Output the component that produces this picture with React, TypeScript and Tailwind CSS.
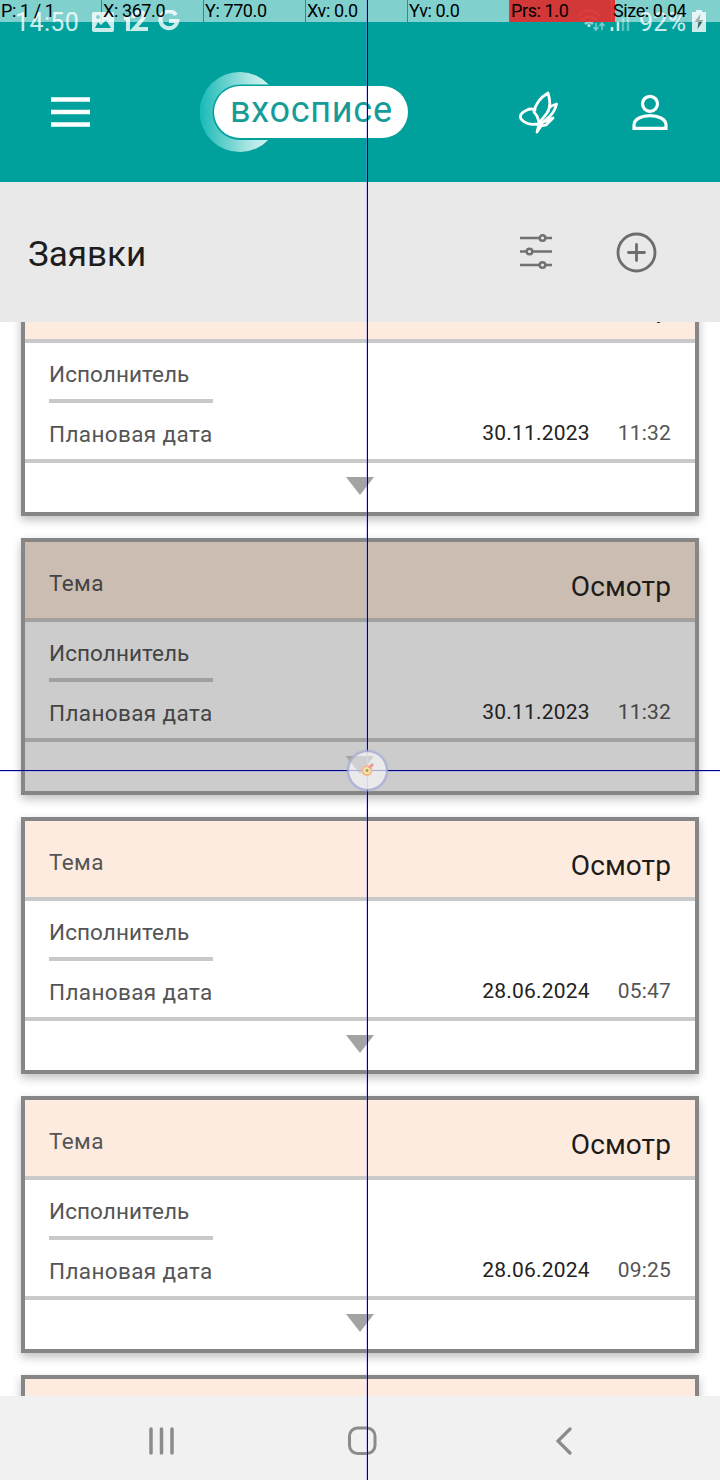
import React from 'react';

type Request = { date: string; time: string; pressed?: boolean };

const requests: Request[] = [
  { date: '30.11.2023', time: '11:32' },
  { date: '30.11.2023', time: '11:32', pressed: true },
  { date: '28.06.2024', time: '05:47' },
  { date: '28.06.2024', time: '09:25' },
  { date: '28.06.2024', time: '09:25' },
];

function Card({ date, time, pressed }: Request) {
  const line = pressed ? 'border-[#a3a1a0]' : 'border-[#c9c9c9]';
  const label = pressed ? 'text-[#444444]' : 'text-[#555555]';
  return (
    <article
      className={`flex h-[257px] shrink-0 flex-col border-4 border-[#868686] shadow-[0_4px_9px_rgba(0,0,0,0.25)] ${pressed ? 'bg-[#cccccc]' : 'bg-white'}`}
    >
      <div className={`flex h-20 shrink-0 justify-between border-b-4 px-6 ${line} ${pressed ? 'bg-[#cbbdb2]' : 'bg-[#feebe0]'}`}>
        <span className={`pt-[27px] text-[22.5px] leading-7 tracking-[0.4px] ${label}`}>Тема</span>
        <span className="pt-[29px] text-[28px] leading-8 tracking-[0.1px] text-[#1c1b1a]">Осмотр</span>
      </div>
      <div className={`flex h-[120px] shrink-0 justify-between border-b-4 px-6 ${line}`}>
        <div className={`w-[164px] whitespace-nowrap text-[22.5px] leading-7 ${label}`}>
          <div className={`h-[60px] border-b-4 pt-[17px] tracking-[0.08px] ${line}`}>Исполнитель</div>
          <div className="pt-[17px] tracking-[0.38px]">Плановая дата</div>
        </div>
        <div className="flex items-start gap-7 pt-[76px] text-[21px] leading-7 tracking-[0.2px]">
          <span className="text-[#222222]">{date}</span>
          <span className={pressed ? 'text-[#444444]' : 'text-[#555555]'}>{time}</span>
        </div>
      </div>
      <div className="flex justify-center pt-[14px]">
        <svg width="28" height="19" viewBox="0 0 28 19" className={pressed ? 'text-[#828282]' : 'text-[#a3a3a3]'}>
          <path d="M0 0H28L14 18Z" fill="currentColor" />
        </svg>
      </div>
    </article>
  );
}

function StatusBar() {
  return (
    <div className="flex h-11 items-start justify-between pl-[15px] pr-[14px] text-white/80">
      <div className="flex items-start">
        <span className="w-[77px] pt-[8px] text-[25px] leading-[30px] tracking-[0.4px]">14:50</span>
        <svg width="22" height="20" viewBox="0 0 22 20" className="mt-3">
          <path fill="currentColor" fillRule="evenodd" d="M2 0H20Q22 0 22 2V18Q22 20 20 20H2Q0 20 0 18V2Q0 0 2 0ZM3 16H19L14 8L9 13L6 10ZM6 3A2 2 0 1 0 6 7A2 2 0 0 0 6 3Z" />
        </svg>
        <svg width="28" height="24" viewBox="0 0 28 24" className="ml-2 mt-2">
          <path d="M2 10H6V23M11 10Q12 3 18 4Q25 5 20 12L12 21H26" fill="none" stroke="currentColor" strokeWidth="4" />
        </svg>
        <svg width="22" height="22" viewBox="0 0 22 22" className="ml-2 mt-[10px]">
          <path d="M18 5A8.5 8.5 0 1 0 19.3 11H11" fill="none" stroke="currentColor" strokeWidth="4" />
        </svg>
      </div>
      <div className="flex items-start">
        <svg width="58" height="24" viewBox="0 0 58 24" className="mt-2" fill="none" stroke="currentColor">
          <g strokeWidth="2.5" opacity=".7">
            <path d="M1 8Q12-3 23 8M4 12.500Q12 5 20 12.500M8 16Q12 12.500 16 16" />
          </g>
          <circle cx="12" cy="17.500" r="1.600" fill="currentColor" stroke="none" />
          <path d="M19 15V22M16.500 19L19 22L21.500 19M25 22V15M22.500 18L25 15L27.500 18" strokeWidth="1.500" opacity=".6" />
          <path d="M35 19V23M41 14V23" strokeWidth="2.500" />
          <path d="M46 10V23M51 5V23" strokeWidth="2.500" opacity=".45" />
        </svg>
        <span className="ml-[4px] w-[53px] pt-[8px] text-[25px] leading-[30px] tracking-[0.3px]">92%</span>
        <svg width="14" height="22" viewBox="0 0 14 22" className="mt-[10px]">
          <path d="M4 0H10V2H14V22H0V2H4Z" fill="currentColor" />
          <path d="M8.500 4L2.500 12H6.500L5.500 19L11.500 10H7.500Z" fill="#37625f" />
        </svg>
      </div>
    </div>
  );
}

function Logo() {
  return (
    <svg width="210" height="84" viewBox="0 -2 210 84" className="shrink-0">
      <defs>
        <linearGradient id="moon" x1="0" x2="1">
          <stop offset="0" stopColor="#17b9b5" />
          <stop offset=".7" stopColor="#a9e5e2" />
          <stop offset="1" stopColor="#d8f5f3" />
        </linearGradient>
      </defs>
      <path d="M69 12.800A40 40 0 1 0 69 67.200Z" fill="url(#moon)" />
      <rect x="12.500" y="12.500" width="196" height="55.500" rx="27.700" fill="#00a19d" />
      <rect x="14" y="14" width="194" height="52" rx="26" fill="#ffffff" />
      <text x="30" y="50" textLength="162" fontFamily="Roboto, sans-serif" fontSize="36" fill="#159c98">вхосписе</text>
    </svg>
  );
}

const cells = ['P: 1 / 1', 'X: 367.0', 'Y: 770.0', 'Xv: 0.0', 'Yv: 0.0', 'Prs: 1.0', 'Size: 0.04'];

function PointerOverlay() {
  return (
    <div className="pointer-events-none absolute inset-0">
      <div className="grid h-[22px] grid-cols-[101px_101px_101px_101px_101px_101px_1fr] gap-px text-[18px] leading-[22px] tracking-[-0.4px] text-black">
        {cells.map((text, i) => (
          <div
            key={text}
            className={`whitespace-nowrap pl-px ${i === 5 ? 'bg-[#e82c2c]/90' : i === 6 ? 'bg-[linear-gradient(to_right,#e03333_3px,rgba(255,255,255,0.5)_3px)]' : 'bg-white/50'}`}
          >
            {text}
          </div>
        ))}
      </div>
      <svg width="720" height="1480" viewBox="0 0 720 1480" className="absolute inset-0">
        <defs>
          <radialGradient id="touch">
            <stop offset="0" stopColor="#fff" stopOpacity=".65" />
            <stop offset=".8" stopColor="#fff" stopOpacity=".65" />
            <stop offset=".86" stopColor="#a5abd8" stopOpacity=".9" />
            <stop offset="1" stopColor="#a5abd8" stopOpacity="0" />
          </radialGradient>
        </defs>
        <path d="M0 771.500H720M366.500 0V1480" stroke="#8080ff" strokeOpacity=".35" />
        <path d="M0 770.500H720M367.500 0V1480" stroke="#000080" />
        <circle cx="367.500" cy="770.500" r="22" fill="url(#touch)" />
        <circle cx="367.500" cy="770.500" r="17.500" fill="#e8e8ea" fillOpacity=".5" />
        <path d="M346 756H374L360 774Z" fill="#c4c4c6" fillOpacity=".5" />
        <path d="M348 770.500H387" stroke="#a9a9ca" />
        <path d="M367.500 752V789" stroke="#e5dda8" />
        <circle cx="367" cy="770.500" r="4.500" fill="#f5e6a0" stroke="#f7b893" strokeWidth="2" />
        <path d="M369 768L373 764" stroke="#f29a92" strokeWidth="3" />
        <circle cx="367" cy="770.500" r="1.500" fill="#9e9b7c" />
      </svg>
    </div>
  );
}

export default function App() {
  return (
    <div className="relative flex h-[1480px] w-[720px] flex-col overflow-hidden bg-white font-[Roboto,sans-serif]">
      <header className="h-[182px] shrink-0 bg-[#00a19d]">
        <StatusBar />
        <div className="flex h-[136px] items-center pl-[51px]">
          <svg width="39" height="30" viewBox="0 0 39 30" className="mr-[110px]">
            <path d="M0 2.500H39M0 15H39M0 27.500H39" stroke="white" strokeWidth="4.500" />
          </svg>
          <Logo />
          <svg width="42" height="44" viewBox="0 0 42 44" className="ml-[108px]" fill="none" stroke="white" strokeWidth="2.800" strokeLinejoin="round" strokeLinecap="round">
            <path d="M20 34C12 35 8 34 4 30C0 26 4 22 9 20Q13 18 17 20M21 32L19 26L16 22Q18 10 30 3Q34 16 29 23L21 33M31 18Q34 15 38.500 14Q37 21 32 26L22 35M19 42L21 34L35 28L28 35L23 36Z" />
          </svg>
          <svg width="36" height="38" viewBox="0 -1 36 38" className="ml-[72px]" fill="none" stroke="white" strokeWidth="3.200">
            <circle cx="18" cy="9.800" r="7.500" />
            <path d="M2 34.300V31C2 18.500 34 18.500 34 31V34.300Z" />
          </svg>
        </div>
      </header>
      <div className="flex h-[140px] shrink-0 items-center bg-[#e9e9e9] pl-7">
        <h1 className="w-[492px] pt-[5px] text-[35px] leading-[44px] text-[#1d1d1d]">Заявки</h1>
        <svg width="32" height="36" viewBox="0 0 32 36" fill="none" stroke="#727272" strokeWidth="2.500">
          <path d="M0 4H32M0 17.500H32M0 31H32" />
          <g fill="#e9e9e9">
            <circle cx="22.500" cy="4" r="2.800" />
            <circle cx="9.500" cy="17.500" r="2.800" />
            <circle cx="22.500" cy="31" r="2.800" />
          </g>
        </svg>
        <svg width="41" height="42" viewBox="0 0 41 42" className="ml-[64px]" fill="none" stroke="#6d6d6d" strokeWidth="2.800" strokeLinecap="round">
          <circle cx="20.500" cy="21.500" r="18.500" />
          <path d="M12.500 21.500H28.500M20.500 13.500V29.500" />
        </svg>
      </div>
      <main className="h-[1074px] shrink-0 overflow-hidden px-[21px]">
        <div className="-mt-[63px] flex flex-col gap-[22px]">
          {requests.map((request, i) => (
            <Card key={i} {...request} />
          ))}
        </div>
      </main>
      <nav className="flex h-[84px] items-center bg-[#f1f1f1] pl-[149px] pt-[5px]">
        <svg width="26" height="28" viewBox="0 0 26 28" stroke="#8b8b8b" strokeWidth="3.500" strokeLinecap="round">
          <path d="M2 2V26M12.500 2V26M23 2V26" />
        </svg>
        <svg width="30" height="30" viewBox="0 0 30 30" className="ml-[172px]" fill="none" stroke="#8b8b8b" strokeWidth="3">
          <rect x="2.500" y="2" width="25.500" height="25.500" rx="8" />
        </svg>
        <svg width="18" height="28" viewBox="0 0 18 28" className="ml-[178px]" fill="none" stroke="#8b8b8b" strokeWidth="3.200" strokeLinecap="round">
          <path d="M15 2L3 14L15 26" />
        </svg>
      </nav>
      <PointerOverlay />
    </div>
  );
}
